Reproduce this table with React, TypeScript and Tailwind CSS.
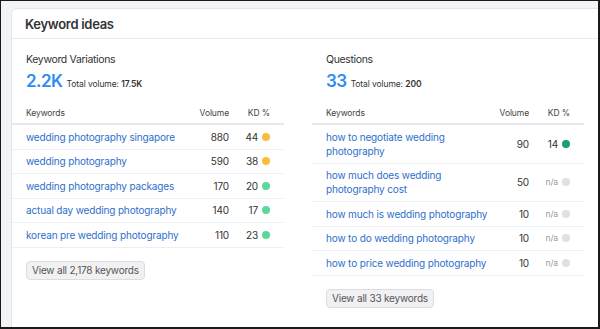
import React from "react";

type Row = { kw: string; vol: number; kd: number | null };

const variations: Row[] = [
  { kw: "wedding photography singapore", vol: 880, kd: 44 },
  { kw: "wedding photography", vol: 590, kd: 38 },
  { kw: "wedding photography packages", vol: 170, kd: 20 },
  { kw: "actual day wedding photography", vol: 140, kd: 17 },
  { kw: "korean pre wedding photography", vol: 110, kd: 23 },
];

const questions: Row[] = [
  { kw: "how to negotiate wedding photography", vol: 90, kd: 14 },
  { kw: "how much does wedding photography cost", vol: 50, kd: null },
  { kw: "how much is wedding photography", vol: 10, kd: null },
  { kw: "how to do wedding photography", vol: 10, kd: null },
  { kw: "how to price wedding photography", vol: 10, kd: null },
];

// KD dot colour buckets
const dotColor = (kd: number | null) => {
  if (kd === null) return "bg-[#dfe0e6]";
  if (kd < 15) return "bg-[#14a06f]";
  if (kd < 30) return "bg-[#5dd69a]";
  return "bg-[#fbbd3e]";
};

const Block = ({
  title,
  count,
  total,
  rows,
  button,
}: {
  title: string;
  count: string;
  total: string;
  rows: Row[];
  button: string;
}) => (
  <div className="flex flex-col">
    <div className="px-[14px]">
      <p className="text-[10.5px] leading-4 tracking-[-0.35px] text-[#333]">{title}</p>
      <div className="mt-[2px] flex items-baseline gap-[4px]">
        <span className="text-[17px] leading-[22px] font-semibold tracking-[-0.5px] text-[#2f8cf2]">
          {count}
        </span>
        <span className="text-[8.5px] tracking-[-0.1px] text-[#333]">
          Total volume: <b className="font-semibold">{total}</b>
        </span>
      </div>
    </div>

    <div className="mt-[15px] grid grid-cols-[1fr_36px_55px] border-b-2 border-[#e6e7ec] pb-[4px] text-[8.5px] leading-3 tracking-[-0.1px] text-[#444]">
      <span className="pl-[14px]">Keywords</span>
      <span className="text-right">Volume</span>
      <span className="pr-[14px] text-right">KD %</span>
    </div>

    {rows.map((r) => (
      <div
        key={r.kw}
        className="grid grid-cols-[1fr_36px_55px] items-center border-b border-[#eeeff2] py-[4.75px] text-[10px] leading-[14px] tracking-[-0.15px]"
      >
        <span className="pl-[14px] text-[#2e6fcc]">{r.kw}</span>
        <span className="text-right text-[#333]">{r.vol}</span>
        <span className="flex items-center justify-end gap-[4px] pr-[14px]">
          {r.kd === null ? (
            <span className="text-[8.5px] text-[#999]">n/a</span>
          ) : (
            <span className="text-[#333]">{r.kd}</span>
          )}
          <span className={`h-[8px] w-[8px] rounded-full ${dotColor(r.kd)}`} />
        </span>
      </div>
    ))}

    <div className="flex px-[14px] pt-[13px]">
      <button className="rounded-[4px] border border-[#dcdde1] bg-[#f1f1f3] px-[5px] py-[2px] text-[10px] leading-[13px] tracking-[-0.2px] text-[#555]">
        {button}
      </button>
    </div>
  </div>
);

export default function App() {
  return (
    <div
      className="h-[329px] w-[600px] overflow-hidden border-t border-l border-r-2 border-b-2 border-[#1a1a1a] bg-[#f3f4f8] pt-[7px] pl-[10px]"
      style={{ fontFamily: "Inter, 'Noto Sans', sans-serif" }}
    >
      <div className="h-[340px] w-[600px] rounded-[6px] border border-[#e4e5ea] bg-white">
        <div className="flex h-[30px] items-center border-b border-[#e8e9ee] px-[13px] pt-[2px]">
          <h2 className="text-[13px] font-semibold tracking-[-0.3px] text-[#333]">Keyword ideas</h2>
        </div>
        <div className="grid grid-cols-[272px_272px] gap-[28px] pt-[13px]">
          <Block
            title="Keyword Variations"
            count="2.2K"
            total="17.5K"
            rows={variations}
            button="View all 2,178 keywords"
          />
          <Block
            title="Questions"
            count="33"
            total="200"
            rows={questions}
            button="View all 33 keywords"
          />
        </div>
      </div>
    </div>
  );
}
